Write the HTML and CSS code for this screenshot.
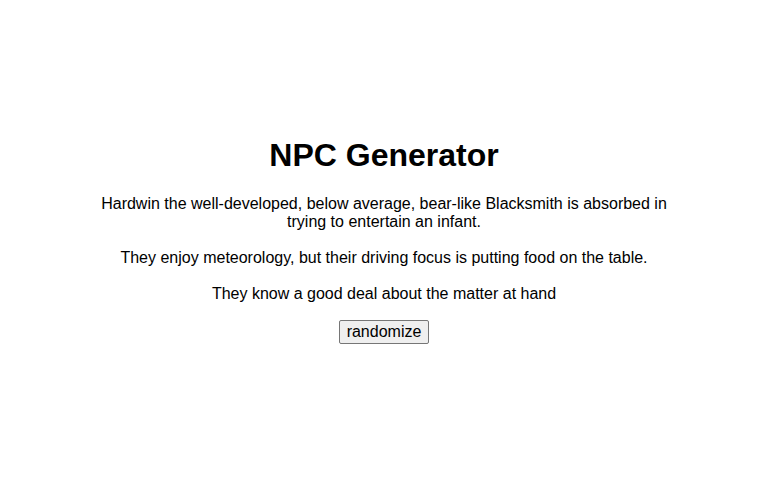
FILE: index.html
```html
<!DOCTYPE html>
<html>
<head>
<meta charset="utf-8">
<title>NPC Generator</title>
<link rel="stylesheet" href="styles.css">
</head>
<body>
<main class="app">
  <h1 class="title">NPC Generator</h1>
  <p class="line">Hardwin the well-developed, below average, bear-like Blacksmith is absorbed in trying to entertain an infant.</p>
  <p class="line">They enjoy meteorology, but their driving focus is putting food on the table.</p>
  <p class="line">They know a good deal about the matter at hand</p>
  <div class="actions"><button class="btn" type="button">randomize</button></div>
</main>
</body>
</html>
```
FILE: styles.css
```css
html, body {
  margin: 0;
  padding: 0;
  height: 100%;
}
body {
  display: flex;
  justify-content: center;
  align-items: center;
  font-family: "Liberation Sans", Arial, sans-serif;
  color: #000;
  background: #fff;
}
.app {
  width: 580px;
  text-align: center;
}
.title {
  font-size: 32px;
  line-height: 37px;
  font-weight: bold;
  margin: 0 0 21px;
}
.line {
  font-size: 16px;
  line-height: 18px;
  margin: 18px 0;
}
.title + .line {
  margin-top: 0;
}
.actions {
  margin-top: -1px;
  line-height: 0;
}
.btn {
  font-family: "Liberation Sans", Arial, sans-serif;
  font-size: 16px;
  line-height: 18px;
  padding: 2px 7px;
  background: #efefef;
  color: #000;
  border: 1px solid #767676;
  border-radius: 2px;
}
```
